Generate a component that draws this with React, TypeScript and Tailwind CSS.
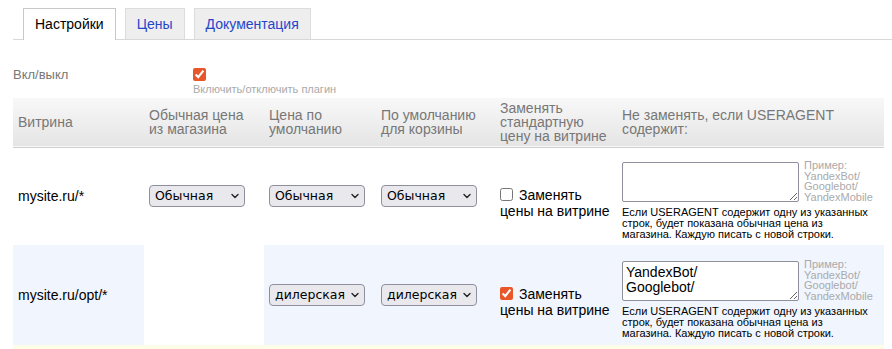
import React from 'react';

const PRICE_OPTIONS = ['Обычная', 'дилерская'];

const EXAMPLE_LINES = ['Пример:', 'YandexBot/', 'Googlebot/', 'YandexMobile'];

interface StorefrontRow {
  mask: string;
  basePrice?: string;
  defaultPrice: string;
  cartPrice: string;
  replace: boolean;
  agents: string;
  shaded: boolean;
}

const ROWS: StorefrontRow[] = [
  {
    mask: 'mysite.ru/*',
    basePrice: 'Обычная',
    defaultPrice: 'Обычная',
    cartPrice: 'Обычная',
    replace: false,
    agents: '',
    shaded: false,
  },
  {
    mask: 'mysite.ru/opt/*',
    defaultPrice: 'дилерская',
    cartPrice: 'дилерская',
    replace: true,
    agents: 'YandexBot/\nGooglebot/',
    shaded: true,
  },
];

const PriceSelect: React.FC<{ value: string }> = ({ value }) => (
  <div className="relative inline-block align-middle">
    <select
      defaultValue={value}
      className="block h-[22px] w-[96px] appearance-none rounded-[4px] border border-[#8f8f9d] bg-[#e9e9ed] pl-[5px] font-['DejaVu_Sans',sans-serif] text-[12.5px] text-black">
      {PRICE_OPTIONS.map(opt => (
        <option key={opt} value={opt}>
          {opt}
        </option>
      ))}
    </select>
    <svg
      className="pointer-events-none absolute top-[8px] right-[6px] h-[6px] w-[8px]"
      viewBox="0 0 8 6"
      fill="none"
      stroke="#222"
      strokeWidth="1.4"
      strokeLinecap="round"
      strokeLinejoin="round">
      <path d="M1 1.5 4 4.5 7 1.5" />
    </svg>
  </div>
);

const AgentsCell: React.FC<{ agents: string }> = ({ agents }) => (
  <div>
    <div className="flex items-end">
      <textarea
        defaultValue={agents}
        className="h-[40px] w-[177px] rounded-[2px] border border-[#8f8f9d] bg-white px-[3px] py-[3px] text-[14px] leading-[15px] text-black"
      />
      <div className="ml-[5px] text-[11px] leading-[10.5px] text-[#aaa]">
        {EXAMPLE_LINES.map(line => (
          <div key={line}>{line}</div>
        ))}
      </div>
    </div>
    <div className="mt-[5px] w-[250px] text-[11px] leading-[11px] text-black">
      Если USERAGENT содержит одну из указанных строк, будет показана обычная цена из магазина. Каждую писать с
      новой строки.
    </div>
  </div>
);

export default function App() {
  return (
    <div className="min-h-[349px] bg-white font-['Liberation_Sans',Arial,sans-serif] text-[14px] text-black">
      {/* tabs */}
      <div className="ml-[13px] flex gap-[9px] border-b border-[#d8d8d8] pt-[8px] pl-[10px]">
        <div className="-mb-px flex h-[32px] items-center border border-b-0 border-[#c8c8c8] bg-white px-[11px]">
          Настройки
        </div>
        <div className="flex h-[31px] items-center border border-b-0 border-[#dcdcdc] bg-[#eeeeee] px-[11px] text-[#2646c9]">
          Цены
        </div>
        <div className="flex h-[31px] items-center border border-b-0 border-[#dcdcdc] bg-[#eeeeee] px-[11px] text-[#2646c9]">
          Документация
        </div>
      </div>

      {/* on/off */}
      <div className="mt-[28px] ml-[13px] flex">
        <div className="w-[180px] text-[13px] leading-[14px] text-[#777]">Вкл/выкл</div>
        <div>
          <input type="checkbox" defaultChecked className="m-0 block h-[13px] w-[13px] accent-[#e8562a]" />
          <div className="mt-[2px] text-[11px] leading-[12px] text-[#aaa]">Включить/отключить плагин</div>
        </div>
      </div>

      {/* storefront table */}
      <table className="mt-[3px] ml-[13px] w-[871px] table-fixed border-collapse">
        <colgroup>
          <col className="w-[131px]" />
          <col className="w-[120px]" />
          <col className="w-[112px]" />
          <col className="w-[119px]" />
          <col className="w-[122px]" />
          <col className="w-[267px]" />
        </colgroup>
        <thead>
          <tr className="h-[49px] border-b border-[#cfcfcf] bg-gradient-to-b from-[#f8f8f8] to-[#e5e5e5] text-left text-[#777]">
            <th className="px-[5px] py-[3px] align-middle font-normal leading-[14px]">Витрина</th>
            <th className="px-[5px] py-[3px] align-middle font-normal leading-[14px]">
              Обычная цена из магазина
            </th>
            <th className="px-[5px] py-[3px] align-middle font-normal leading-[14px]">Цена по умолчанию</th>
            <th className="px-[5px] py-[3px] align-middle font-normal leading-[14px]">
              По умолчанию для корзины
            </th>
            <th className="px-[5px] py-[3px] align-middle font-normal leading-[14px]">
              Заменять стандартную цену на витрине
            </th>
            <th className="px-[5px] py-[3px] align-middle font-normal leading-[14px]">
              Не заменять, если USERAGENT содержит:
            </th>
          </tr>
        </thead>
        <tbody>
          {ROWS.map((row, i) => (
            <tr key={row.mask} className={`${i === 0 ? 'h-[98px]' : 'h-[100px]'} ${row.shaded ? 'bg-[#f0f5fe]' : 'bg-white'}`}>
              <td className="px-[5px] align-middle">{row.mask}</td>
              <td className={`px-[5px] align-middle ${row.basePrice ? '' : 'bg-white'}`}>
                {row.basePrice && <PriceSelect value={row.basePrice} />}
              </td>
              <td className="px-[5px] align-middle">
                <PriceSelect value={row.defaultPrice} />
              </td>
              <td className="px-[5px] align-middle">
                <PriceSelect value={row.cartPrice} />
              </td>
              <td className="px-[5px] pt-[14px] align-middle leading-[16px]">
                <label>
                  <input
                    type="checkbox"
                    defaultChecked={row.replace}
                    className="m-0 mr-[6px] h-[13px] w-[13px] align-[-1px] accent-[#e8562a]"
                  />
                  Заменять цены на витрине
                </label>
              </td>
              <td className="px-[5px] pt-[8px] align-middle">
                <AgentsCell agents={row.agents} />
              </td>
            </tr>
          ))}
          <tr className="h-[4px] bg-[#fefde8]">
            <td colSpan={6} />
          </tr>
        </tbody>
      </table>
    </div>
  );
}
